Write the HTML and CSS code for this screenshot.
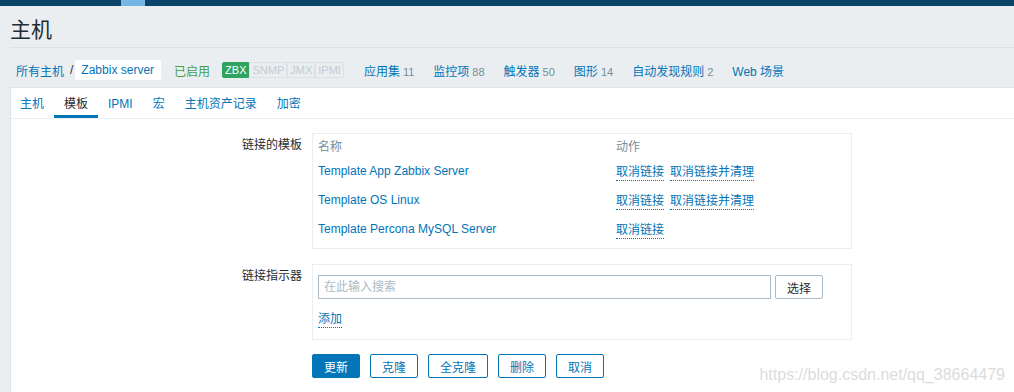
FILE: index.html
```html
<!DOCTYPE html>
<html lang="zh">
<head>
<meta charset="utf-8">
<title>主机</title>
<link rel="stylesheet" href="styles.css">
</head>
<body>
<div class="topbar"><span class="topbar-mark"></span></div>
<header class="page-header"><h1 class="title">主机</h1></header>
<nav class="host-nav">
  <a class="link" href="#">所有主机</a>
  <span class="sep">/</span>
  <span class="crumb">Zabbix server</span>
  <span class="enabled">已启用</span>
  <span class="status">
    <span class="st st-on">ZBX</span><span class="st">SNMP</span><span class="st">JMX</span><span class="st">IPMI</span>
  </span>
  <span class="nav-items">
    <span class="nav-item"><a class="link" href="#">应用集</a><span class="count">11</span></span>
    <span class="nav-item"><a class="link" href="#">监控项</a><span class="count">88</span></span>
    <span class="nav-item"><a class="link" href="#">触发器</a><span class="count">50</span></span>
    <span class="nav-item"><a class="link" href="#">图形</a><span class="count">14</span></span>
    <span class="nav-item"><a class="link" href="#">自动发现规则</a><span class="count">2</span></span>
    <span class="nav-item"><a class="link" href="#">Web 场景</a></span>
  </span>
</nav>
<main class="panel">
  <div class="tabs">
    <a class="tab tab-first" href="#">主机</a>
    <a class="tab tab-active" href="#">模板</a>
    <a class="tab" href="#">IPMI</a>
    <a class="tab" href="#">宏</a>
    <a class="tab" href="#">主机资产记录</a>
    <a class="tab" href="#">加密</a>
  </div>
  <div class="form">
    <div class="form-row">
      <div class="form-label">链接的模板</div>
      <div class="box box-table">
        <table class="tpl-table">
          <thead>
            <tr><th class="col-name">名称</th><th>动作</th></tr>
          </thead>
          <tbody>
            <tr><td><a class="link" href="#">Template App Zabbix Server</a></td><td><a class="action" href="#">取消链接</a><a class="action" href="#">取消链接并清理</a></td></tr>
            <tr><td><a class="link" href="#">Template OS Linux</a></td><td><a class="action" href="#">取消链接</a><a class="action" href="#">取消链接并清理</a></td></tr>
            <tr><td><a class="link" href="#">Template Percona MySQL Server</a></td><td><a class="action" href="#">取消链接</a></td></tr>
          </tbody>
        </table>
      </div>
    </div>
    <div class="form-row">
      <div class="form-label">链接指示器</div>
      <div class="box box-link">
        <div class="search-line">
          <input class="search" type="text" placeholder="在此输入搜索">
          <button class="btn-select" type="button">选择</button>
        </div>
        <a class="action add" href="#">添加</a>
      </div>
    </div>
    <div class="form-row">
      <div class="form-label"></div>
      <div class="buttons">
        <button class="btn btn-primary" type="button">更新</button>
        <button class="btn" type="button">克隆</button>
        <button class="btn" type="button">全克隆</button>
        <button class="btn" type="button">删除</button>
        <button class="btn" type="button">取消</button>
      </div>
    </div>
  </div>
</main>
<div class="watermark">https://blog.csdn.net/qq_38664479</div>
</body>
</html>
```
FILE: styles.css
```css
* { box-sizing: border-box; }
html, body { height: 100%; }
body {
  margin: 0;
  height: 392px;
  overflow: hidden;
  background: #ebeef0;
  font-family: "Liberation Sans", Arial, "Noto Sans CJK SC", sans-serif;
  font-size: 12px;
  color: #1f2c33;
  display: flex;
  flex-direction: column;
  position: relative;
}
a { text-decoration: none; }
.link { color: #0275b8; }

.topbar {
  height: 6px;
  background: #0b4468;
  display: flex;
  flex: none;
}
.topbar-mark {
  margin-left: 121px;
  width: 24px;
  background: #76b6e6;
}

.page-header {
  margin-left: 10px;
  padding-top: 7px;
  border-bottom: 1px solid #dde1e5;
  flex: none;
}
.title {
  margin: 0;
  font-size: 21px;
  font-weight: normal;
  line-height: 34px;
  color: #1f2c33;
}

.host-nav {
  flex: none;
  display: flex;
  align-items: center;
  padding: 12px 0 7px 16px;
  height: 39px;
  white-space: nowrap;
}
.sep { margin: 0 2px 0 6px; color: #1f2c33; }
.crumb {
  background: #fff;
  height: 20px;
  line-height: 20px;
  padding: 0 7px 0 6px;
  border-radius: 2px;
  color: #0275b8;
}
.enabled { color: #429e47; margin-left: 13px; }
.status { display: flex; margin-left: 12px; }
.st {
  height: 16px;
  line-height: 14px;
  font-size: 11px;
  padding: 0 2px;
  border: 1px solid #dde1e5;
  color: #c2cbd1;
}
.st-on { background: #2fa35f; border-color: #2fa35f; color: #fff; border-radius: 2px 0 0 2px; }
.st:last-child { border-radius: 0 2px 2px 0; }
.nav-items { display: flex; gap: 19px; margin-left: 20px; }
.count { color: #768d99; font-size: 11px; margin-left: 3px; }

.panel {
  flex: 1;
  margin-left: 10px;
  background: #fff;
  border-left: 1px solid #dfe4e7;
  border-top: 1px solid #dfe4e7;
}
.tabs {
  display: flex;
  height: 31px;
  border-bottom: 1px solid #ebeef0;
}
.tab {
  color: #0275b8;
  padding: 0 10px;
  line-height: 28px;
  height: 30px;
  border-bottom: 3px solid transparent;
  padding-top: 2px;
}
.tab-first { padding-left: 9px; }
.tab-active { color: #1f2c33; border-bottom-color: #0275b8; }

.form { padding-top: 14px; }
.form-row {
  display: grid;
  grid-template-columns: 291px 540px;
  column-gap: 10px;
  margin-bottom: 15px;
}
.form-label {
  text-align: right;
  padding-top: 5px;
  line-height: 14px;
}
.box { border: 1px solid #ebeef0; }
.box-table { padding: 0 5px 5px; }
.tpl-table { border-collapse: collapse; width: 100%; }
.tpl-table th {
  font-weight: normal;
  text-align: left;
  color: #768d99;
  height: 22px;
  padding: 0;
}
.tpl-table .col-name { width: 298px; }
.tpl-table td { height: 29px; padding: 0; }
.action {
  color: #0275b8;
  border-bottom: 1px dotted #0275b8;
  margin-right: 6px;
  padding-bottom: 1px;
}
.box-link { padding: 10px 5px 11px; }
.search-line { display: flex; gap: 4px; }
.search {
  width: 453px;
  height: 24px;
  border: 1px solid #acbbc7;
  padding: 0 5px;
  font: inherit;
  color: #1f2c33;
  outline: none;
}
.search::placeholder { color: #acbbc7; }
.btn-select {
  width: 48px;
  height: 24px;
  background: #fff;
  border: 1px solid #acbbc7;
  border-radius: 2px;
  font: inherit;
  color: #1f2c33;
  padding: 0;
}
.add { display: inline-block; margin-top: 13px; line-height: 14px; }

.buttons { display: flex; gap: 10px; margin-top: -1px; }
.btn {
  height: 24px;
  padding: 0 11px;
  background: #fff;
  border: 1px solid #0275b8;
  border-radius: 2px;
  color: #0275b8;
  font: inherit;
}
.btn-primary { background: #0275b8; color: #fff; }

.watermark {
  position: absolute;
  right: 9px;
  bottom: 8px;
  font-size: 16px;
  color: #dcdcdc;
  text-shadow: 0 0 1px #fff;
  font-family: "Liberation Sans", Arial, sans-serif;
}
```
